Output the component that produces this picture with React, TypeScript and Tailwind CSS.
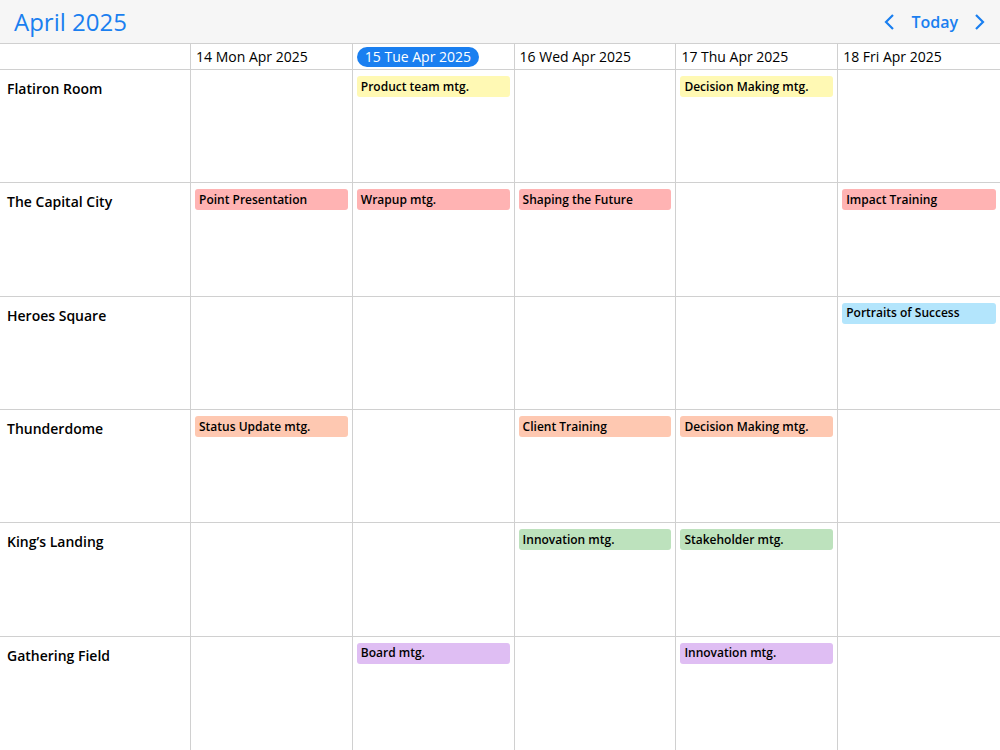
import React from "react";

const days = ["14 Mon Apr 2025", "15 Tue Apr 2025", "16 Wed Apr 2025", "17 Thu Apr 2025", "18 Fri Apr 2025"];
const Y = "bg-[#fff9b4]", P = "bg-[#ffb3b3]", S = "bg-[#fec8b1]", G = "bg-[#bde2bd]", B = "bg-[#b3e5fc]", V = "bg-[#dfbef3]";
const rows: { name: string; ev: ([string, string] | null)[] }[] = [
  { name: "Flatiron Room", ev: [null, ["Product team mtg.", Y], null, ["Decision Making mtg.", Y], null] },
  { name: "The Capital City", ev: [["Point Presentation", P], ["Wrapup mtg.", P], ["Shaping the Future", P], null, ["Impact Training", P]] },
  { name: "Heroes Square", ev: [null, null, null, null, ["Portraits of Success", B]] },
  { name: "Thunderdome", ev: [["Status Update mtg.", S], null, ["Client Training", S], ["Decision Making mtg.", S], null] },
  { name: "King’s Landing", ev: [null, null, ["Innovation mtg.", G], ["Stakeholder mtg.", G], null] },
  { name: "Gathering Field", ev: [null, ["Board mtg.", V], null, ["Innovation mtg.", V], null] },
];

export default function App() {
  return (
    <div className="w-[1000px] h-[750px] flex flex-col bg-white text-black" style={{ fontFamily: "'Open Sans', 'Noto Sans', sans-serif" }}>
      <div className="h-[44px] bg-[#f6f6f6] border-b border-[#d0d0d0] flex items-center justify-between pl-[14px] pr-[14px] shrink-0">
        <div className="text-[24px] text-[#1a7ff0] leading-none">April 2025</div>
        <div className="flex items-center gap-[14px] text-[#1a7ff0]">
          <svg width="14" height="18" viewBox="0 0 14 18"><path d="M10 2 L3 9 L10 16" fill="none" stroke="currentColor" strokeWidth="2.2" /></svg>
          <span className="text-[16px] font-semibold">Today</span>
          <svg width="14" height="18" viewBox="0 0 14 18"><path d="M4 2 L11 9 L4 16" fill="none" stroke="currentColor" strokeWidth="2.2" /></svg>
        </div>
      </div>
      <div className="flex-1 grid grid-cols-[191px_repeat(5,1fr)] grid-rows-[26px_repeat(6,1fr)]">
        <div className="border-b border-r border-[#d0d0d0]" />
        {days.map((d, i) => (
          <div key={d} className={`border-b border-[#d0d0d0] flex items-center pl-[4px] text-[14px] ${i < 4 ? "border-r" : ""}`}>
            {i === 1 ? (
              <span className="bg-[#1a7ff0] text-white rounded-full px-[8px] leading-[20px]">{d}</span>
            ) : (
              <span className="pl-[1px]">{d}</span>
            )}
          </div>
        ))}
        {rows.map((r, ri) => (
          <React.Fragment key={r.name}>
            <div className={`border-r border-[#d0d0d0] ${ri < 5 ? "border-b" : ""} pl-[7px] pt-[8px] text-[14px] font-semibold`}>{r.name}</div>
            {r.ev.map((e, ci) => (
              <div key={ci} className={`border-[#d0d0d0] ${ri < 5 ? "border-b" : ""} ${ci < 4 ? "border-r" : ""} px-[4px] pt-[6px]`}>
                {e && (
                  <div className={`${e[1]} rounded-[3px] h-[21px] flex items-center px-[4px] text-[12px] font-semibold`}>{e[0]}</div>
                )}
              </div>
            ))}
          </React.Fragment>
        ))}
      </div>
    </div>
  );
}
